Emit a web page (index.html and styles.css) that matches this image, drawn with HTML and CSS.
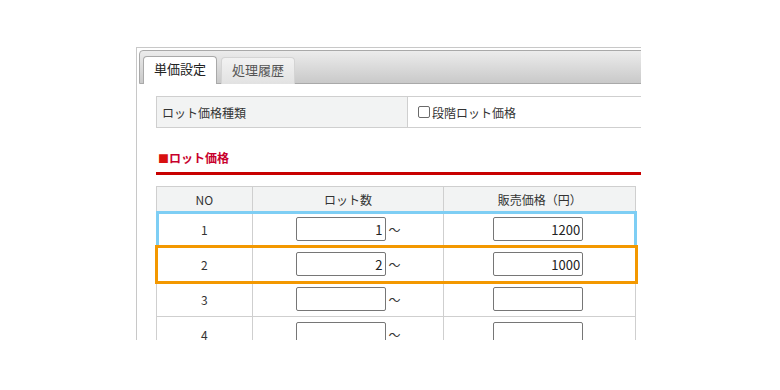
FILE: index.html
```html
<!DOCTYPE html>
<html lang="ja">
<head>
<meta charset="utf-8">
<link rel="stylesheet" href="styles.css">
</head>
<body>
<div class="viewport">
  <div class="panel">
    <div class="tabbar">
      <div class="tab active">単価設定</div>
      <div class="tab">処理履歴</div>
    </div>
    <div class="content">
      <table class="type-table">
        <tr>
          <th>ロット価格種類</th>
          <td><label class="check"><input type="checkbox"><span>段階ロット価格</span></label></td>
        </tr>
      </table>
      <h2 class="section-title"><span class="mark">■</span>ロット価格</h2>
      <table class="lot-table">
        <thead>
          <tr><th class="c-no">NO</th><th class="c-lot">ロット数</th><th class="c-price">販売価格（円）</th></tr>
        </thead>
        <tbody>
          <tr class="hl-blue"><td>1</td><td><input class="num" value="1"><span class="tilde">〜</span></td><td><input class="num" value="1200"></td></tr>
          <tr class="hl-orange"><td>2</td><td><input class="num" value="2"><span class="tilde">〜</span></td><td><input class="num" value="1000"></td></tr>
          <tr><td>3</td><td><input class="num" value=""><span class="tilde">〜</span></td><td><input class="num" value=""></td></tr>
          <tr><td>4</td><td><input class="num" value=""><span class="tilde">〜</span></td><td><input class="num" value=""></td></tr>
        </tbody>
      </table>
    </div>
  </div>
</div>
</body>
</html>
```
FILE: styles.css
```css
html, body {
  margin: 0;
  padding: 0;
  background: #fff;
}
body {
  font-family: "Noto Sans CJK JP", "Noto Sans", sans-serif;
  color: #333;
  font-size: 12px;
}
.viewport {
  margin: 47px 0 0 136px;
  width: 505px;
  height: 293px;
  overflow: hidden;
}
.panel {
  width: 560px;
  border: 1px solid #c8c8c8;
  border-right: none;
  padding: 2px;
  height: 400px;
  box-sizing: border-box;
}
.tabbar {
  height: 34px;
  box-sizing: border-box;
  border: 1px solid #a9a9a9;
  border-radius: 4px 4px 0 0;
  background: linear-gradient(#ececec, #c9c9c9);
  display: flex;
  align-items: flex-end;
  padding-left: 3px;
  gap: 4px;
}
.tab {
  height: 27px;
  box-sizing: border-box;
  padding: 0 10px;
  border: 1px solid #d4d4d4;
  border-bottom: none;
  border-radius: 4px 4px 0 0;
  background: linear-gradient(#f2f2f2, #e2e2e2);
  color: #555;
  font-size: 13px;
  line-height: 24px;
  margin-bottom: -1px;
}
.tab.active {
  background: #fff;
  border-color: #a9a9a9;
  color: #222;
  height: 28px;
}
.content {
  padding: 12px 0 0 17px;
}
.type-table {
  border-collapse: collapse;
  width: 540px;
}
.type-table th, .type-table td {
  border: 1px solid #cfcfcf;
  height: 30px;
  padding: 0 5px;
  font-weight: normal;
  text-align: left;
  font-size: 12px;
}
.type-table th {
  width: 240px;
  background: #f2f3f3;
}
.check {
  display: flex;
  align-items: center;
  gap: 2px;
  padding-left: 5px;
}
.check input {
  appearance: none;
  -webkit-appearance: none;
  width: 12px;
  height: 12px;
  margin: 0;
  border: 1px solid #6a6a6a;
  border-radius: 2px;
  background: #fff;
}
.section-title {
  margin: 21px 0 0 0;
  padding: 0 0 5px 2px;
  border-bottom: 3px solid #c80000;
  color: #c8002d;
  font-size: 12px;
  font-weight: bold;
  line-height: 18px;
  width: 540px;
}
.mark {
  color: #d81010;
  font-size: 11px;
}
.lot-table {
  margin-top: 11px;
  border-collapse: collapse;
  width: 480px;
}
.lot-table th, .lot-table td {
  border: 1px solid #cfcfcf;
  text-align: center;
  font-size: 12px;
  font-weight: normal;
  padding: 0;
}
.lot-table th {
  background: #f2f3f3;
  height: 24px;
}
.lot-table td {
  height: 34px;
}
.c-no { width: 95px; }
.c-lot { width: 191px; }
.c-price { width: 191px; }
.num {
  width: 90px;
  height: 24px;
  box-sizing: border-box;
  border: 1px solid #767676;
  border-radius: 2px;
  text-align: right;
  font-family: "Noto Sans CJK JP", "Noto Sans", sans-serif;
  font-size: 13px;
  color: #222;
  padding: 0 2px;
  vertical-align: middle;
}
.tilde {
  display: inline-block;
  width: 15px;
  text-align: right;
  vertical-align: middle;
  font-size: 12px;
}
.lot-table td:nth-child(3) .num {
  margin-right: 3px;
}
.hl-blue {
  outline: 3px solid #7ecef4;
  outline-offset: -2px;
}
.hl-orange {
  outline: 3px solid #f39800;
  outline-offset: -1px;
}
```
